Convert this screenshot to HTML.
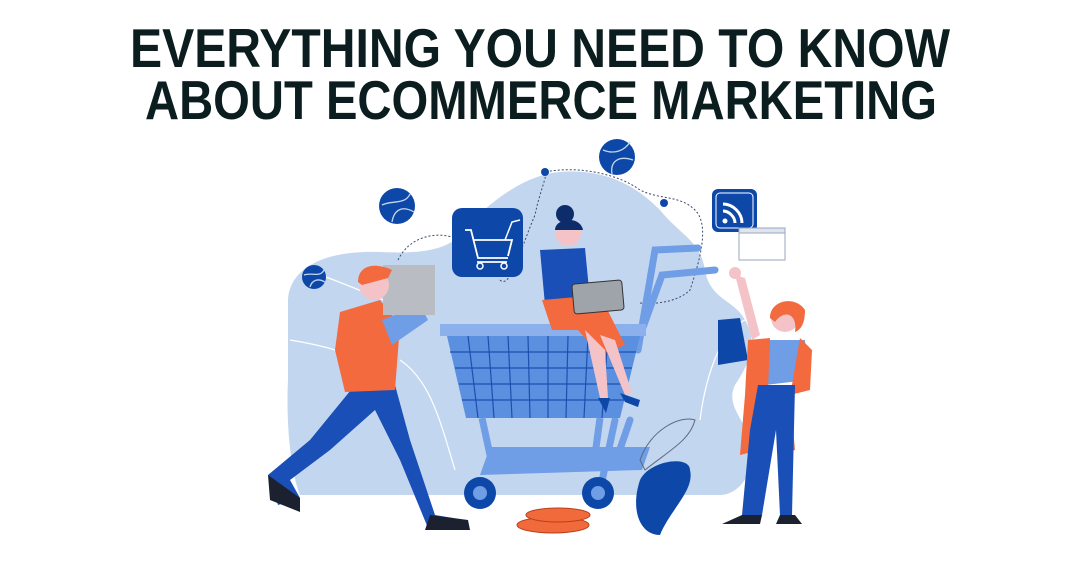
<!DOCTYPE html>
<html><head><meta charset="utf-8"><style>
html,body{margin:0;padding:0;background:#fff;width:1080px;height:566px;overflow:hidden}
svg{display:block}
</style></head><body>
<svg width="1080" height="566" viewBox="0 0 1080 566" xmlns="http://www.w3.org/2000/svg">
<g font-family="Liberation Sans, sans-serif" font-weight="bold" fill="#0b1d1f" font-size="55">
<text x="130" y="67" textLength="820" lengthAdjust="spacingAndGlyphs">EVERYTHING YOU NEED TO KNOW</text>
<text x="145" y="119" textLength="792" lengthAdjust="spacingAndGlyphs">ABOUT ECOMMERCE MARKETING</text>
</g>
<!-- background blob -->
<path d="M288 300 C290 265 330 250 380 252 C420 254 440 250 455 240 C480 210 520 175 560 172 C610 168 640 190 660 210 C680 235 700 240 705 270 C710 300 735 300 745 320 C760 345 745 370 735 385 C725 405 745 420 750 440 C758 470 740 495 720 495 L300 495 C290 470 286 420 288 380 Z" fill="#c3d6ef"/>
<!-- dotted path -->
<path d="M398 260 C410 235 440 230 460 240 M500 280 C510 290 520 250 535 215 C540 190 548 175 545 172 C580 165 620 175 640 190 C660 200 680 195 695 210 C710 225 700 260 690 290 C680 300 660 305 640 303" fill="none" stroke="#3a4a6a" stroke-width="1" stroke-dasharray="2 2"/>
<circle cx="545" cy="172" r="4" fill="#0d48a8"/><circle cx="664" cy="203" r="4" fill="#0d48a8"/>
<!-- white lines -->
<path d="M290 340 C320 345 340 350 360 360 M320 275 C350 285 380 300 410 310 M400 360 C430 380 440 420 455 470 M700 420 C705 380 720 330 745 320" fill="none" stroke="#fff" stroke-width="1.2"/>
<!-- balls -->
<g fill="#0d48a8"><circle cx="617" cy="157" r="18"/><circle cx="397" cy="206" r="18"/><circle cx="314" cy="277" r="12"/></g>
<g fill="none" stroke="#c3d6ef" stroke-width="1.3"><path d="M603 150 C615 155 625 150 630 142 M612 174 C610 162 618 155 633 160"/><path d="M382 205 C392 200 405 205 410 194 M392 222 C394 210 402 205 414 212"/><path d="M304 275 C312 272 320 278 324 270 M310 287 C312 280 318 278 325 282"/></g>
<!-- cart icon -->
<rect x="452" y="208" width="71" height="69" rx="10" fill="#0d48a8"/>
<path d="M465 230 L471 230 L478 258 L508 258 M474 240 L512 240 L508 256 M477 262 L507 262" fill="none" stroke="#fff" stroke-width="1.8"/>
<circle cx="480" cy="266" r="3" fill="none" stroke="#fff" stroke-width="1.5"/><circle cx="504" cy="266" r="3" fill="none" stroke="#fff" stroke-width="1.5"/>
<path d="M505 240 L512 222 L520 220" fill="none" stroke="#fff" stroke-width="1.5"/>
<!-- wifi icon -->
<rect x="712" y="189" width="45" height="43" rx="6" fill="#0d48a8"/>
<rect x="716" y="193" width="37" height="35" rx="4" fill="none" stroke="#fff" stroke-width="1"/>
<g fill="none" stroke="#fff" stroke-width="3"><path d="M723 204 C733 204 742 213 742 223"/><path d="M723 211 C729 211 735 217 735 223"/></g><circle cx="725" cy="221" r="2.5" fill="#fff"/>
<!-- browser -->
<rect x="739" y="228" width="46" height="32" fill="#fff" stroke="#9aa7bd" stroke-width="1"/>
<rect x="739" y="228" width="46" height="5" fill="#dfe5ef" stroke="#9aa7bd" stroke-width="1"/>
<!-- cart -->
<g stroke="#6f9de6" stroke-width="7" fill="none" stroke-linecap="round">
<path d="M638 350 L655 250 L698 248"/><path d="M642 330 L662 275 L715 270"/>
<path d="M615 420 L598 500"/><path d="M630 420 L618 455"/>
</g>
<path d="M490 447 L650 447 L642 470 L480 475 Z" fill="#6f9de6"/>
<path d="M440 324 L646 324 L646 336 L440 336 Z" fill="#8bb0ec"/>
<path d="M447 336 L640 336 L620 418 L466 418 Z" fill="#5b8fe0"/>
<g stroke="#1e4fb0" stroke-width="1.2"><path d="M450 352 L636 352 M455 368 L632 368 M459 384 L628 384 M462 400 L624 400"/><path d="M468 336 L478 418 M488 336 L494 418 M508 336 L512 418 M528 336 L530 418 M548 336 L548 418 M568 336 L566 418 M588 336 L584 418 M608 336 L602 418"/></g>
<path d="M482 418 L490 455 M600 418 L595 455" stroke="#6f9de6" stroke-width="7"/>
<circle cx="480" cy="493" r="16" fill="#0d48a8"/><circle cx="480" cy="493" r="7" fill="#6f9de6"/>
<circle cx="598" cy="493" r="16" fill="#0d48a8"/><circle cx="598" cy="493" r="7" fill="#6f9de6"/>
<!-- coins -->
<ellipse cx="553" cy="525" rx="36" ry="8" fill="#f06a3c" stroke="#b8401c"/><ellipse cx="558" cy="515" rx="32" ry="7" fill="#f06a3c" stroke="#b8401c"/>
<!-- plant -->
<path d="M640 460 C650 430 680 415 695 420 C690 440 670 450 645 470 Z" fill="none" stroke="#5a6a80" stroke-width="1"/>
<path d="M640 480 C650 460 690 455 690 470 C695 490 670 510 660 535 C640 535 630 510 640 480Z" fill="#0d48a8"/>
<!-- man -->
<path d="M355 385 L395 385 L410 440 L435 515 L465 520 L468 528 L428 528 L400 460 L375 410 L330 450 L290 480 L300 498 L278 505 L268 475 L310 440 Z" fill="#1a4fb8"/>
<path d="M340 312 L380 300 L400 325 L395 390 L345 392 L335 350 Z" fill="#f26a3d"/>
<path d="M382 320 L420 305 L428 320 L392 345 Z" fill="#6f9de6"/>
<rect x="383" y="265" width="52" height="50" fill="#b9bcc2"/>
<circle cx="374" cy="285" r="15" fill="#f4c3c8"/>
<path d="M358 282 C358 265 375 262 392 270 L388 278 L362 285 Z" fill="#f26a3d"/>
<path d="M268 475 L300 498 L300 512 L270 500 Z M430 515 L468 520 L470 530 L425 530 Z" fill="#1c2130"/>
<!-- sitting woman -->
<circle cx="568" cy="233" r="13" fill="#f4c3c8"/><circle cx="565" cy="214" r="9" fill="#0d2d6a"/><path d="M555 230 C555 218 580 215 583 230" fill="#0d2d6a"/>
<path d="M540 250 L585 248 L590 300 L545 305 Z" fill="#1a4fb8"/>
<path d="M542 300 L600 295 L625 345 L600 355 L578 330 L552 330 Z" fill="#f26a3d"/>
<path d="M585 330 L600 398 L608 398 L605 350 M600 335 L625 395 L632 393 L615 340" fill="#f4c3c8"/>
<path d="M598 398 L610 398 L606 413 Z M620 393 L640 400 L638 407 L625 402Z" fill="#0d48a8"/>
<rect x="573" y="282" width="50" height="30" rx="3" fill="#9fa3aa" stroke="#333" stroke-width="1" transform="rotate(-5 598 297)"/>
<!-- right woman -->
<path d="M735 275 L745 278 L760 335 L752 340 Z" fill="#f4c3c8"/>
<circle cx="735" cy="273" r="6" fill="#f4c3c8"/>
<path d="M718 320 L740 318 L748 360 L718 365 Z" fill="#0d48a8"/>
<circle cx="785" cy="318" r="14" fill="#f4c3c8"/>
<path d="M770 318 C770 300 795 295 805 310 C805 325 800 330 795 332 C798 315 785 308 775 322 Z" fill="#f26a3d"/>
<path d="M765 340 L805 340 L808 380 L765 385 Z" fill="#6f9de6"/>
<path d="M748 340 L770 338 L768 390 L760 450 L740 455 L745 395 Z M800 338 L812 350 L810 390 L790 395 L795 450 L780 455 Z" fill="#f26a3d"/>
<path d="M758 385 L795 385 L792 515 L780 515 L776 430 L762 515 L742 515 L750 430 Z" fill="#1a4fb8"/>
<path d="M742 515 L762 515 L760 524 L722 524 Z M780 515 L795 515 L802 524 L776 524 Z" fill="#1c2130"/>
</svg>
</body></html>
